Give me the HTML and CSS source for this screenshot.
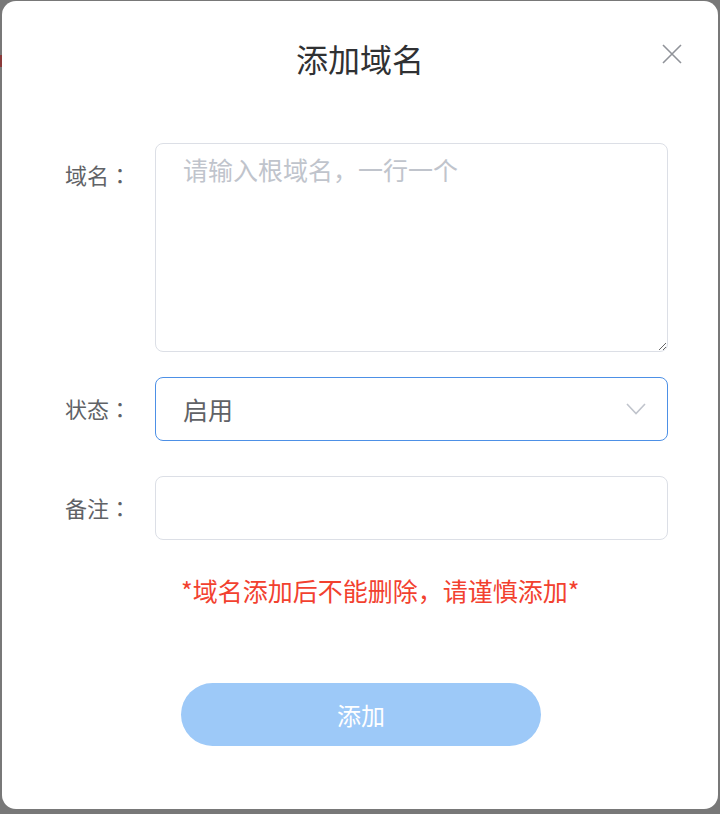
FILE: index.html
```html
<!DOCTYPE html>
<html lang="zh-CN">
<head>
<meta charset="utf-8">
<title>添加域名</title>
<link rel="stylesheet" href="styles.css">
</head>
<body>
<div class="overlay">
  <span class="bg-mark"></span>
  <div class="modal">
    <div class="modal-header">
      <h2 class="modal-title">添加域名</h2>
      <button class="close-btn" aria-label="关闭">
        <svg width="20" height="20" viewBox="0 0 20 20"><path d="M1 1 L19 19 M19 1 L1 19" stroke="#909399" stroke-width="1.6" fill="none"/></svg>
      </button>
    </div>
    <form class="form">
      <div class="form-row row-domain">
        <label class="form-label">域名<span class="colon" lang="zh-TW">：</span></label>
        <textarea class="field textarea" placeholder="请输入根域名，一行一个"></textarea>
      </div>
      <div class="form-row row-status">
        <label class="form-label">状态<span class="colon" lang="zh-TW">：</span></label>
        <div class="field select">
          <span class="select-value">启用</span>
          <svg class="chevron" width="20" height="12" viewBox="0 0 20 12"><path d="M1 1 L10 10.5 L19 1" stroke="#c0c4cc" stroke-width="1.6" fill="none"/></svg>
        </div>
      </div>
      <div class="form-row row-remark">
        <label class="form-label">备注<span class="colon" lang="zh-TW">：</span></label>
        <input class="field input" type="text">
      </div>
      <div class="warning">*域名添加后不能删除，请谨慎添加*</div>
      <div class="actions">
        <button type="button" class="submit-btn">添加</button>
      </div>
    </form>
  </div>
</div>
</body>
</html>
```

FILE: styles.css
```css
html, body {
  margin: 0;
  padding: 0;
  height: 100%;
}
body {
  font-family: "Noto Sans CJK SC", "Noto Sans", sans-serif;
  background: #777777;
}
.overlay {
  position: relative;
  height: 814px;
  box-sizing: border-box;
  padding: 1px 2px 0 2px;
  background: #787878;
}
.bg-mark {
  position: absolute;
  left: 0;
  top: 55px;
  width: 2px;
  height: 12px;
  background: #8a3a3a;
}
.modal {
  position: relative;
  height: 808px;
  background: #ffffff;
  border-radius: 14px;
  box-sizing: border-box;
}
.modal-header {
  padding-top: 36px;
  text-align: center;
}
.modal-title {
  margin: 0;
  font-size: 32px;
  line-height: 42px;
  font-weight: 400;
  color: #303133;
}
.close-btn {
  position: absolute;
  top: 43px;
  right: 36px;
  width: 20px;
  height: 20px;
  padding: 0;
  border: 0;
  background: transparent;
  cursor: pointer;
}
.close-btn svg {
  display: block;
}
.form {
  padding-top: 64px;
}
.form-row {
  display: flex;
  align-items: flex-start;
}
.row-domain { margin-bottom: 25px; }
.row-status { margin-bottom: 35px; }
.row-remark { margin-bottom: 34px; }
.form-label {
  width: 153px;
  box-sizing: border-box;
  padding-right: 24px;
  text-align: right;
  font-size: 22px;
  line-height: 62px;
  color: #606266;
}
.colon {
  font-family: "Noto Sans CJK TC", "Noto Sans CJK SC", sans-serif;
}
.field {
  width: 513px;
  box-sizing: border-box;
  border: 1px solid #dcdfe6;
  border-radius: 8px;
  background: #fff;
  font-family: "Noto Sans CJK SC", "Noto Sans", sans-serif;
  font-size: 25px;
  color: #606266;
  outline: none;
}
.textarea {
  display: block;
  height: 209px;
  margin: 0;
  padding: 8px 27px;
  line-height: 34px;
  resize: vertical;
}
.textarea::placeholder {
  color: #c0c4cc;
}
.select {
  height: 64px;
  display: flex;
  align-items: center;
  justify-content: space-between;
  padding: 0 21px 0 27px;
  border-color: #4d90e6;
}
.select-value {
  line-height: 32px;
}
.chevron {
  display: block;
}
.input {
  display: block;
  height: 64px;
  margin: 0;
  padding: 0 27px;
}
.warning {
  margin-left: 179px;
  font-size: 25px;
  line-height: 32px;
  color: #f2412f;
}
.actions {
  display: flex;
  justify-content: center;
  padding-top: 77px;
  padding-left: 2px;
}
.submit-btn {
  width: 360px;
  height: 63px;
  border: 0;
  border-radius: 32px;
  background: #9dc9f8;
  color: #ffffff;
  font-family: "Noto Sans CJK SC", "Noto Sans", sans-serif;
  font-size: 24px;
  padding: 0;
}
```
